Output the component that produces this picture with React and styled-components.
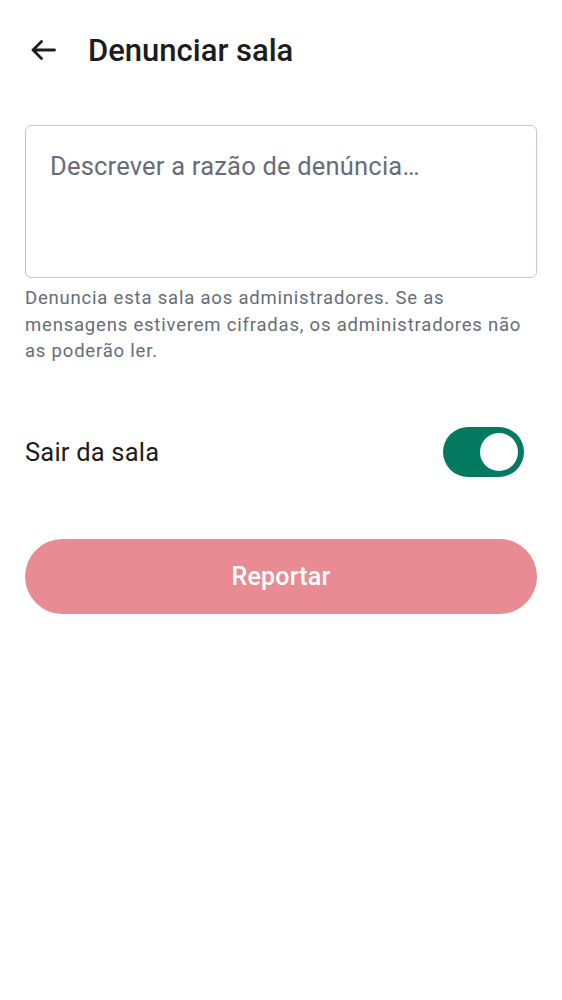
import React from "react";
import styled, { createGlobalStyle } from "styled-components";

const GlobalStyle = createGlobalStyle`
  html, body {
    margin: 0;
    padding: 0;
    background: #ffffff;
    font-family: Roboto, "Noto Sans", sans-serif;
    -webkit-font-smoothing: antialiased;
  }
`;

const Screen = styled.div`
  width: 562px;
  min-height: 1000px;
  background: #ffffff;
  display: flex;
  flex-direction: column;
`;

const TopBar = styled.header`
  height: 100px;
  display: flex;
  align-items: center;
  padding: 0 0 0 28px;
  gap: 30px;
`;

const BackButton = styled.button`
  width: 30px;
  height: 30px;
  padding: 0;
  border: none;
  background: transparent;
  display: flex;
  align-items: center;
  justify-content: center;
  color: #1b1d22;
  cursor: pointer;
`;

const Title = styled.h1`
  margin: 0;
  font-size: 31px;
  font-weight: 500;
  color: #1b1d22;
  letter-spacing: 0;
`;

const Content = styled.main`
  padding: 25px 25px 0;
  display: flex;
  flex-direction: column;
`;

const TextArea = styled.textarea`
  box-sizing: border-box;
  width: 100%;
  height: 153px;
  border: 1.5px solid #c5c8ce;
  border-radius: 6px;
  padding: 25px 24px;
  font-family: Roboto, "Noto Sans", sans-serif;
  font-size: 25.5px;
  letter-spacing: 0.2px;
  color: #1b1d22;
  resize: none;
  outline: none;

  &::placeholder {
    color: #656d77;
  }
`;

const Helper = styled.p`
  margin: 7px 0 0;
  font-size: 18.5px;
  line-height: 26.5px;
  letter-spacing: 0.8px;
  color: #656d77;
`;

const ToggleRow = styled.div`
  margin-top: 62px;
  display: flex;
  align-items: center;
  justify-content: space-between;
  padding-right: 13px;
`;

const ToggleLabel = styled.span`
  font-size: 25.5px;
  color: #1b1d22;
  letter-spacing: 0.2px;
`;

const Track = styled.div`
  width: 81px;
  height: 50px;
  border-radius: 25px;
  background: ${({ $on }) => ($on ? "#037a5f" : "#c8cbd1")};
  display: flex;
  align-items: center;
  justify-content: ${({ $on }) => ($on ? "flex-end" : "flex-start")};
  padding: 0 6px;
  box-sizing: border-box;
`;

const Thumb = styled.div`
  width: 38px;
  height: 38px;
  border-radius: 50%;
  background: #ffffff;
`;

const PrimaryButton = styled.button`
  margin-top: 62px;
  height: 75px;
  width: 100%;
  border: none;
  border-radius: 38px;
  background: ${({ disabled }) => (disabled ? "#e98b92" : "#d51928")};
  color: #ffffff;
  font-family: Roboto, "Noto Sans", sans-serif;
  font-size: 25px;
  font-weight: 500;
  letter-spacing: 0.2px;
`;

const ArrowLeft = () => (
  <svg width="26" height="20" viewBox="0 0 26 20" fill="none">
    <path
      d="M3 10H24.5M11.5 1.5L3 10l8.5 8.5"
      stroke="currentColor"
      strokeWidth="2.8"
      strokeLinecap="round"
      strokeLinejoin="round"
    />
  </svg>
);

const App = () => {
  return (
    <Screen>
      <GlobalStyle />
      <TopBar>
        <BackButton aria-label="Voltar">
          <ArrowLeft />
        </BackButton>
        <Title>Denunciar sala</Title>
      </TopBar>
      <Content>
        <TextArea placeholder="Descrever a razão de denúncia…" />
        <Helper>
          Denuncia esta sala aos administradores. Se as mensagens estiverem
          cifradas, os administradores não as poderão ler.
        </Helper>
        <ToggleRow>
          <ToggleLabel>Sair da sala</ToggleLabel>
          <Track $on>
            <Thumb />
          </Track>
        </ToggleRow>
        <PrimaryButton disabled>Reportar</PrimaryButton>
      </Content>
    </Screen>
  );
};

export default App;
